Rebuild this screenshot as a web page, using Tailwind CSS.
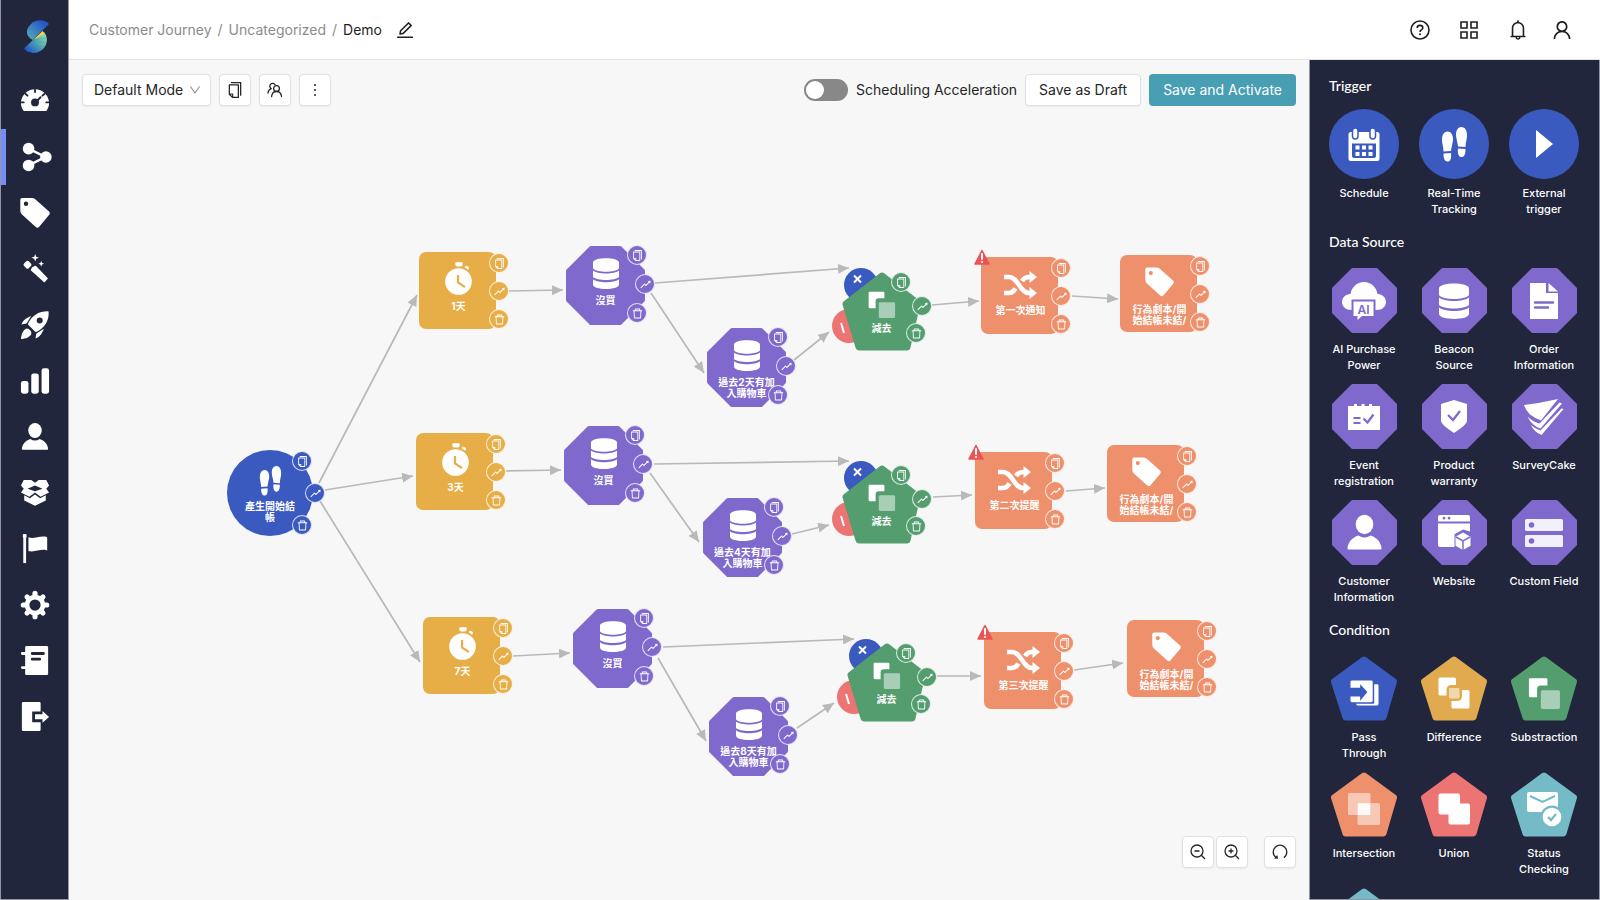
<!DOCTYPE html>
<html lang="en">
<head>
  <meta charset="UTF-8">
  <meta name="viewport" content="width=device-width, initial-scale=1.0">
  <title>Customer Journey - Demo</title>
  <script src="https://cdn.jsdelivr.net/npm/@tailwindcss/browser@4"></script>
</head>
<body class="h-screen flex overflow-hidden bg-[#f7f7f7] font-[Inter,'Noto_Sans_CJK_TC',sans-serif] text-sm text-[#262626]">

  <!-- icon sprite -->
  <svg class="hidden" xmlns="http://www.w3.org/2000/svg">
    <symbol id="copy" viewBox="64 64 896 896"><path d="M832 64H296c-4.400 0-8 3.600-8 8v56c0 4.400 3.600 8 8 8h496v688c0 4.400 3.600 8 8 8h56c4.400 0 8-3.600 8-8V96c0-17.700-14.300-32-32-32zM704 192H192c-17.700 0-32 14.300-32 32v530.700c0 8.500 3.400 16.600 9.400 22.600l173.300 173.300c2.200 2.200 4.700 4 7.400 5.500v1.900h4.200c3.500 1.300 7.200 2 11 2H704c17.700 0 32-14.300 32-32V224c0-17.700-14.300-32-32-32zM350 856.200L263.900 770H350v86.200zM664 888H414V746c0-22.100-17.900-40-40-40H232V264h432v624z"/></symbol>
    <symbol id="rise" viewBox="64 64 896 896"><path d="M917 211l-199 24c-7 1-9 9-5 14l59 59-226 226-102-102c-6-6-16-6-22 0L100 754a8 8 0 0 0 0 11l45 45c3 3 8 3 11 0L433 534l102 102c6 6 16 6 22 0L829 364l59 60a8 8 0 0 0 14-5l24-199c1-5-4-10-9-9z"/></symbol>
    <symbol id="trash" viewBox="64 64 896 896"><path d="M360 184h304v72h72v-80c0-35-29-64-64-64H352c-35 0-64 29-64 64v80h72zM864 256H160c-18 0-32 14-32 32v32c0 4 4 8 8 8h60l25 523c2 34 30 61 64 61h454c34 0 62-27 64-61l25-523h60c4 0 8-4 8-8v-32c0-18-14-32-32-32zM731 840H293l-25-512h487z"/></symbol>
    <symbol id="edit" viewBox="64 64 896 896"><path d="M257.700 752c2 0 4-.2 6-.5L431.900 722c2-.4 3.900-1.300 5.300-2.800l423.900-423.900a10 10 0 0 0 0-14.100L694.900 114.900c-1.900-1.900-4.400-2.900-7.100-2.900s-5.200 1-7.100 2.900L256.800 538.800c-1.500 1.500-2.400 3.300-2.800 5.300l-29.500 168.200a33.500 33.500 0 0 0 9.400 29.800c6.600 6.400 14.900 9.900 23.800 9.900zm67.400-174.400L687.800 215l73.300 73.300-362.700 362.600-88.900 15.700 15.600-89zM880 836H144c-17.700 0-32 14.300-32 32v36c0 4.400 3.600 8 8 8h784c4.400 0 8-3.600 8-8v-36c0-17.700-14.300-32-32-32z"/></symbol>
    <symbol id="down" viewBox="64 64 896 896"><path d="M884 256h-75c-5 0-10 3-13 7L512 654 228 263c-3-4-8-7-13-7h-75c-6 0-10 7-6 13l352 486c13 17 39 17 52 0l352-486c4-6 0-13-6-13z"/></symbol>
    <symbol id="bell" viewBox="64 64 896 896"><path d="M816 768h-24V428c0-141-104-258-240-277v-39c0-22-18-40-40-40s-40 18-40 40v39c-136 19-240 136-240 277v340h-24c-18 0-32 14-32 32v32c0 4 4 8 8 8h216c0 62 50 112 112 112s112-50 112-112h216c4 0 8-4 8-8v-32c0-18-14-32-32-32zM512 888c-26 0-48-21-48-48h96c0 27-21 48-48 48zM304 768V428c0-56 22-108 61-147s91-61 147-61 108 22 147 61 61 91 61 147v340z"/></symbol>
    <symbol id="account" viewBox="64 64 896 896"><path d="M858.500 763.600a374 374 0 0 0-80.600-119.500 375.600 375.600 0 0 0-119.500-80.600c-.4-.2-.8-.3-1.200-.5C719.500 518 760 444.700 760 362c0-137-111-248-248-248S264 225 264 362c0 82.700 40.500 156 102.800 201.100-.4.200-.8.300-1.200.5-44.800 18.900-85 46-119.500 80.600a375.600 375.600 0 0 0-80.600 119.500A371.700 371.700 0 0 0 136 901.800a8 8 0 0 0 8 8.200h60c4.400 0 7.900-3.500 8-7.800 2-77.200 33-149.500 87.800-204.300 56.700-56.700 132-87.900 212.200-87.900s155.500 31.200 212.200 87.900C779 752.700 810 825 812 902.200c.1 4.400 3.600 7.800 8 7.800h60a8 8 0 0 0 8-8.200c-1-47.800-10.900-94.300-29.500-138.200zM512 534c-45.900 0-89.100-17.900-121.600-50.400S340 407.900 340 362s17.900-89.100 50.400-121.600S466.100 190 512 190s89.100 17.900 121.600 50.400S684 316.100 684 362s-17.900 89.100-50.400 121.600S557.900 534 512 534z"/></symbol>
    <symbol id="help" viewBox="0 0 20 20"><g fill="none" stroke="currentColor" stroke-width="1.600"><circle cx="10" cy="10" r="9"/><path d="M7.200 8C7.200 6.400 8.400 5.400 10 5.400s2.800 1 2.800 2.500c0 2-2.800 2.100-2.800 4.100"/></g><circle cx="10" cy="14.200" r="1"/></symbol>
    <symbol id="apps" viewBox="0 0 18 18"><path fill="none" stroke="currentColor" stroke-width="1.600" d="M1 1h6v6H1zM11 1h6v6h-6zM1 11h6v6H1zM11 11h6v6h-6z"/></symbol>
    <symbol id="team" viewBox="0 0 16 16"><g fill="none" stroke="currentColor" stroke-width="1.300" stroke-linecap="round"><circle cx="9.500" cy="6.500" r="2.900"/><path d="M4.600 14.500c.3-3 2.300-5 4.900-5s4.700 2 5 5M8 2.700A2.800 2.800 0 1 0 4.100 6.500M1 11c.2-2 1.500-3.700 3.300-4.300"/></g></symbol>
    <symbol id="more" viewBox="0 0 16 16"><circle cx="8" cy="3" r="1"/><circle cx="8" cy="8" r="1"/><circle cx="8" cy="13" r="1"/></symbol>
    <symbol id="zoomOut" viewBox="0 0 16 16"><path fill="none" stroke="currentColor" stroke-width="1.300" d="M7 1a6 6 0 1 0 0 12A6 6 0 1 0 7 1zM11.300 11.300L15 15M4.500 7h5"/></symbol>
    <symbol id="zoomIn" viewBox="0 0 16 16"><path fill="none" stroke="currentColor" stroke-width="1.300" d="M7 1a6 6 0 1 0 0 12A6 6 0 1 0 7 1zM11.300 11.300L15 15M4.500 7h5M7 4.500v5"/></symbol>
    <symbol id="reset" viewBox="0 0 16 16"><path fill="none" stroke="currentColor" stroke-width="1.300" d="M4.200 13.500C2 12 1.200 10 1.200 8a6.800 6.800 0 0 1 13.600 0c0 2.300-1 4.300-2.900 5.600"/><path d="M2 14.500l3.300-3.600.7 3.800z"/></symbol>

    <symbol id="gauge" viewBox="0 0 32 32"><path d="M3.500 26C2 24 1 21.500 1 18.500a15 15 0 0 1 30 0c0 3-1 5.500-2.500 7.500q-.5.700-1.500.7H5q-1 0-1.500-.7z"/><g stroke="#21263c" stroke-width="2" stroke-linecap="round" fill="none"><path d="M16 4v2.500M6 8.500l2 1.800M26 8.500l-2 1.800M1 17.500h3M31 17.500h-3M17 17l5-5"/></g><circle cx="16" cy="17.500" r="4.200" fill="#21263c"/></symbol>
    <symbol id="share" viewBox="0 0 32 32"><path stroke="currentColor" stroke-width="2.600" d="M7 7l18 9L7 25" fill="none"/><circle cx="7" cy="7" r="6.200"/><circle cx="7" cy="25" r="6.200"/><circle cx="25.500" cy="16" r="6.200"/></symbol>
    <symbol id="tag" viewBox="0 0 30 30"><path fill-rule="evenodd" d="M2 0h10q1.500 0 3 1l14 12.500q1.500 1.500 0 3.500L19 29q-1.500 1.500-3.200 0L2 16.500Q.3 15 .3 12.500V2Q.3 0 2 0zM6 3.500a2.200 2.200 0 1 0 0 4.400 2.200 2.200 0 1 0 0-4.400z"/></symbol>
    <symbol id="wand" viewBox="0 0 30 30"><path d="M15.200 0l1 2.700 2.800 1-2.800 1-1 2.800-1-2.800-2.800-1 2.800-1zM21.200 6.700l.8 2.200 2.200.8-2.200.8-.8 2.200-.8-2.200-2.200-.8 2.200-.8z"/><path d="M7.500 8.500l2.200 2.200-2.200 2.200-2.200-2.200z" stroke="currentColor" stroke-width="3.500" stroke-linejoin="round"/><path d="M12.500 14l3-1.500L27 24.500l-2.700 3L11.500 16z" stroke="currentColor" stroke-width="1.500" stroke-linejoin="round"/></symbol>
    <symbol id="rocket" viewBox="0 0 32 32"><path fill-rule="evenodd" d="M30.500 1.500c.8 9-3.500 16.500-12 21.500q-1.500.8-2.500 0L9 16q-1-1 0-2.500C14 5 21.500 1 30.500 1.500zM21 8a3.200 3.200 0 1 0 0 6.400A3.200 3.200 0 0 0 21 8zM9.500 7.500L12 6.500 7 14.500 1.500 15.500q1.500-5 8-8zM24.500 22.500l1-2.500-8 5-1 5.500q5-1.500 8-8zM6.500 20C9 19 13 23 12 25.500 10.500 29 6 30.500 1 31c.5-5 2-9.500 5.500-11z"/></symbol>
    <symbol id="bars" viewBox="0 0 32 32"><rect x="1" y="16" width="8" height="13.500" rx="2.500"/><rect x="12" y="8" width="8" height="21.500" rx="2.500"/><rect x="23" y="2.500" width="8" height="27" rx="2.500"/></symbol>
    <symbol id="person" viewBox="0 0 32 32"><ellipse cx="16" cy="9" rx="7.200" ry="8"/><path d="M11 18q5 3.500 10 0c5 1.500 8.500 5.500 9 10.500q0 1-1 1H3q-1 0-1-1c.5-5 4-9 9-10.500z"/></symbol>
    <symbol id="box" viewBox="0 0 32 32"><path fill-rule="evenodd" d="M4 2l8 0 4 3 4-3 8 0 3 6-3 3.500 3 4-9 4.500-6-4.500-6 4.500-9-4.500 3-4L1 8zM16 8l-8 3.500 8 2.500 8-2.500zM4.500 18.500l6 3 5.500-4 5.500 4 6-3V24L16 29.500 4.500 24z"/></symbol>
    <symbol id="flag" viewBox="0 0 32 32"><rect x="3" y="0" width="4" height="4" rx="1"/><rect x="3.500" y="1" width="3" height="30"/><path d="M9 3.500c6 2.500 11-2 19-.5q1 .3 1 1.500v13c-7-2-12 2-19 1q-1 0-1-1z"/></symbol>
    <symbol id="gear" viewBox="0 0 32 32"><circle cx="16" cy="16" r="8.500" fill="none" stroke="currentColor" stroke-width="5"/><g stroke="currentColor" stroke-width="5.500" stroke-linecap="round"><path d="M16 3.500v3M16 25.500v3M3.500 16h3M25.500 16h3M7.500 7.500l1.500 1.500M23 23l1.500 1.500M7.500 24.500L9 23M23 9l1.500-1.500"/></g></symbol>
    <symbol id="notebook" viewBox="0 0 32 32"><rect x="5.500" y="0" width="24.500" height="31" rx="1.500"/><path d="M2.500 8H7M2.500 23H7" stroke="currentColor" stroke-width="3" stroke-linecap="round"/><path d="M13 8h12M13 14h8" stroke="#21263c" stroke-width="3" stroke-linecap="round"/></symbol>
    <symbol id="logout" viewBox="0 0 32 32"><rect x="2" y="0" width="20" height="31" rx="1.500"/><path d="M13 10h10V7l9 9-9 8.500v-3H13z" fill="#21263c"/><path d="M16 13h8V9.500l7 6.500-7 6v-3.500h-8z"/></symbol>

    <symbol id="steps" viewBox="0 0 27 35"><g id="foot"><path d="M1 13C1 8 3 4.500 6.500 4.500S12 8 12 12c0 4-1.500 7-2 12l-7.500.5C2.500 20 1 17 1 13z"/><path d="M2.500 26.500l7.500-.6c.5 5-.5 8.600-3.500 8.600s-4-3.500-4-8z"/></g><use href="#foot" transform="translate(27 -4.500) scale(-1 1)"/></symbol>
    <symbol id="clock" viewBox="0 0 27 33"><path d="M10.500.3h7q.8 3.700-1.500 4.300h-4Q9.700 4 10.500.3zM19.500 5q1.500-2.500 4-.2 1.500 1.700-.5 3z"/><circle cx="13.500" cy="19.500" r="13.300"/><path d="M13 13v7.500l7 4.700" fill="none" stroke="#e7ae47" stroke-width="2.200"/></symbol>
    <symbol id="db" viewBox="0 0 26 31"><path d="M0 4.500C0-1.200 26-1.200 26 4.500v6C22 14.800 4 14.800 0 10.500zM0 12.500c4 4 22 4 26 0V19c-4 4-22 4-26 0zM0 21.200c4 4 22 4 26 0v5.300c0 6-26 6-26 0z"/></symbol>
    <symbol id="shuffle" viewBox="0 0 33 28"><path fill="none" stroke="currentColor" stroke-width="4.600" d="M0 6h5c9 0 11 16 20 16h2M0 22h5c3 0 5-2 6.500-4.500M18 10c1.500-2.500 4-4 7-4h2"/><path d="M25.500 0L33 6l-7.500 6zM25.500 16l7.500 6-7.500 6z"/></symbol>
    <symbol id="minus" viewBox="0 0 32 32"><path d="M3 2h15q1.200 0 1.200 1.200V9H13q-3.500 0-3.500 3.500V20H3q-1.200 0-1.200-1.200V3.200Q1.800 2 3 2z"/><rect x="13" y="13.500" width="18" height="17.500" rx="1.500" opacity=".5"/></symbol>
    <symbol id="diff" viewBox="0 0 32 32"><path d="M2 .5h14.500q1.500 0 1.500 1.500V8h-4.500Q8.500 8 8.500 13v5.500H2Q.5 18.500.5 17V2Q.5.500 2 .5zM24 13h6q1.500 0 1.500 1.500V30q0 1.500-1.500 1.500H15q-1.500 0-1.500-1.500v-6h5.500q5 0 5-5z"/><rect x="11" y="11" width="10.500" height="10.500" rx="1" opacity=".55"/></symbol>
    <symbol id="inter" viewBox="0 0 32 32"><rect width="22.500" height="22" rx="1.500" opacity=".5"/><rect x="9.500" y="10" width="22.500" height="22" rx="1.500" opacity=".5"/><rect x="10" y="10.500" width="12" height="11.500" opacity=".8"/></symbol>
    <symbol id="union" viewBox="0 0 32 32"><rect x=".5" y=".5" width="21.500" height="21" rx="2"/><rect x="10.500" y="10.500" width="21.500" height="21" rx="2"/></symbol>
    <symbol id="pass" viewBox="0 0 30 28"><path d="M2 1h20q1.500 0 1.500 1.500V22q0 1.500-1.500 1.500H2Q.5 23.500.5 22v-4.500h10v4.500L18 13 10.500 5v3.500H.5v-6Q.5 1 2 1z"/><path d="M25 5h3q1.500 0 1.500 1.500v19q0 1.500-1.500 1.500H8q-1.500 0-1.500-1.500v-.3H24q1 0 1-1z"/></symbol>
    <symbol id="mail" viewBox="0 0 36 36"><rect x="1" y="1" width="31" height="20" rx="2"/><path d="M4 5l12.500 6L29 5" fill="none" stroke="#74bac7" stroke-width="2"/><circle cx="26" cy="26" r="11.500" fill="#74bac7"/><circle cx="26" cy="26" r="9.300"/><path d="M22 26l3 3 5-6" fill="none" stroke="#74bac7" stroke-width="2.200"/></symbol>
    <symbol id="calendar" viewBox="0 0 32 33"><path fill-rule="evenodd" d="M3 4h26q2.500 0 2.500 2.500v24Q31.500 33 29 33H3Q.5 33 .5 30.500v-24Q.5 4 3 4zM4 15.500V28q0 2 2 2h20q2 0 2-2V15.500z"/><g fill="currentColor" stroke="#3a5abf" stroke-width="1.500"><rect x="4.500" y="0" width="5.500" height="11" rx="2.700"/><rect x="22" y="0" width="5.500" height="11" rx="2.700"/></g><path d="M7.500 17.500h4v4h-4zM14 17.500h4v4h-4zM20.500 17.500h4v4h-4zM7.500 24h4v4h-4zM14 24h4v4h-4zM20.500 24h4v4h-4z"/></symbol>
    <symbol id="play" viewBox="0 0 17 28"><path d="M0 0l17 14L0 28z"/></symbol>
    <symbol id="ai" viewBox="0 0 44 38"><path d="M9 28C4 28 0 24.500 0 20s3.500-7.500 8.500-8C9.500 5 15 0 22 0s12.500 5 13.500 12c5 .5 8.500 3.500 8.500 8s-4 8-9 8z"/><path d="M9.500 17.500h24v18h-24z" fill="#8069cc"/><path d="M11.500 19.500h20V34H20l-4.500 4v-4h-4z"/><text x="21.500" y="31.500" text-anchor="middle" font-family="Inter" font-weight="600" font-size="12" fill="#8069cc">AI</text></symbol>
    <symbol id="order" viewBox="0 0 28 36"><path d="M0 0h16v10h12v26H0zM18.500 0L28 8.500h-9.500z"/><path d="M5 19.500h18M5 24.500h13" stroke="#8069cc" stroke-width="2.400" stroke-linecap="round"/></symbol>
    <symbol id="event" viewBox="0 0 32 26"><path d="M0 2h6V0h3v2h4.500V0h3v2H21V0h3v2h8v24H0z"/><path d="M5.500 14h7M5.500 19h7M15.500 14.500l4 4 6-8" fill="none" stroke="#8069cc" stroke-width="2.200"/></symbol>
    <symbol id="shield" viewBox="0 0 26 33"><path d="M13 0l13 4v17q0 3.500-13 12Q0 24.500 0 21V4z"/><path d="M7 15l5 5 7-9" fill="none" stroke="#8069cc" stroke-width="2.200"/></symbol>
    <symbol id="survey" viewBox="0 0 40 36"><path d="M0 6q17-2 34-6L17 21.500Q12 20 6 15.500Q2 12 0 6zM3.500 17.500Q9 23 15.500 24.500L35.500 3.500 38 4.500 16.500 29.500Q8 27 3.500 17.500zM7 26q4 4 9.500 5.500L37.500 9.500l2 .5L17.500 36Q10 33 7 26z"/></symbol>
    <symbol id="website" viewBox="0 0 33 36"><path fill-rule="evenodd" d="M2 0h28q2 0 2 2v4.500H0V2Q0 0 2 0zM6 1.800a1.400 1.400 0 1 0 0 2.800 1.400 1.400 0 1 0 0-2.800zM11 1.800a1.400 1.400 0 1 0 0 2.800 1.400 1.400 0 1 0 0-2.800z"/><path d="M0 8.500h32v8l-7-2-8.500 4.800V32H2q-2 0-2-2z"/><path d="M25 17.500l7.500 4.300v9L25 35l-7.500-4.200v-9z"/><path d="M18 22l7 4 7-4M25 26v9" fill="none" stroke="#8069cc" stroke-width="1.500"/></symbol>
    <symbol id="field" viewBox="0 0 38 28"><g opacity=".9"><rect width="38" height="12" rx="1.500"/><rect y="16" width="38" height="12" rx="1.500"/></g><circle cx="6.500" cy="6" r="2.800" fill="#8069cc"/><circle cx="6.500" cy="22" r="2.800" fill="#8069cc"/></symbol>

    <symbol id="octagon" viewBox="0 0 79 79"><path d="M25 2h29l23 23v29L54 77H25L2 54V25z" stroke="currentColor" stroke-width="4" stroke-linejoin="round"/></symbol>
    <symbol id="pentagon" viewBox="0 0 79 79"><path d="M40 4l35 27-10 44H17L4 32z" stroke="currentColor" stroke-width="7" stroke-linejoin="round"/></symbol>
    <symbol id="pentagonTile" viewBox="0 0 66 64"><path d="M33 3l30 22-10.500 36h-38L3 25z" stroke="currentColor" stroke-width="6" stroke-linejoin="round"/></symbol>
    <symbol id="square" viewBox="0 0 79 79"><rect width="77" height="77" rx="7"/></symbol>
    <symbol id="circle" viewBox="0 0 86 86"><circle cx="43" cy="43" r="43"/></symbol>
  </svg>

  <aside class="w-[69px] shrink-0 bg-[#21263c] border-x border-b border-[#9496a3] text-white">
    <a href="#" aria-label="Home" class="h-[73px] flex items-center justify-center pl-1">
      <svg class="w-[25px] h-[34px]" viewBox="0 0 25 34">
        <defs>
          <linearGradient id="logoTop" x1="1" y1="0" x2="0" y2="1"><stop offset="0.2" stop-color="#2457c9"/><stop offset="1" stop-color="#55b3b5"/></linearGradient>
          <linearGradient id="logoBottom" x1="0" y1="1" x2="1" y2="0"><stop offset="0.15" stop-color="#2457c9"/><stop offset="0.5" stop-color="#4fa3b5"/><stop offset="0.85" stop-color="#83dca6"/></linearGradient>
        </defs>
        <path fill="url(#logoTop)" d="M25 4C20-1 12-1 7 4 1 10 1.500 16 8.500 20z"/>
        <path fill="url(#logoBottom)" d="M20 12c4 5 4 12-1 17-6 5.500-14.500 5-19-.5L9 20z"/>
        <path fill="#f3cf57" d="M9 20l9.500-9q1.500 1 2 3z"/>
        <path stroke="#3f8fb0" stroke-width=".4" d="M9 20l13-2M9 20l13 3M9 20l9 9.500M9 20l4 12.500M9 20v13M9 20l-5 11.500"/>
      </svg>
    </a>
    <nav id="menu"></nav>
  </aside>

  <div class="flex-1 min-w-0 flex flex-col">
    <header class="h-15 shrink-0 bg-white border-b border-[#e3e3e3] flex items-center justify-between pl-5 pr-7">
      <nav class="flex items-center gap-1.5 text-[#8c8c8c]">
        <a href="#">Customer Journey</a><span>/</span>
        <a href="#">Uncategorized</a><span>/</span>
        <span class="text-[#1f1f1f]">Demo</span>
        <button aria-label="Rename" class="ml-2 text-[#1f1f1f]"><svg class="size-[18px] fill-current"><use href="#edit"/></svg></button>
      </nav>
      <div class="flex items-center text-[#1f1f1f]">
        <button aria-label="Help" class="mr-[30px]"><svg class="size-5 fill-current"><use href="#help"/></svg></button>
        <button aria-label="Apps" class="mr-[30px]"><svg class="size-[18px] fill-current"><use href="#apps"/></svg></button>
        <button aria-label="Notifications" class="mr-6"><svg class="size-5 fill-current"><use href="#bell"/></svg></button>
        <button aria-label="Account"><svg class="size-5 fill-current"><use href="#account"/></svg></button>
      </div>
    </header>

    <div class="flex-1 min-h-0 flex">
      <main class="relative flex-1 min-w-0 overflow-hidden flex flex-col justify-between">
        <!-- journey canvas -->
        <div id="canvas" class="absolute inset-0">
          <svg class="absolute inset-0 w-full h-full">
            <defs>
              <marker id="arrow" viewBox="0 0 11 10" refX="11" refY="5" markerWidth="11" markerHeight="10" markerUnits="userSpaceOnUse" orient="auto"><path d="M0 0l11 5-11 5z" fill="#b9b9b9"/></marker>
            </defs>
            <g id="edges" stroke="#b9b9b9" stroke-width="1.700"></g>
          </svg>
        </div>

        <div class="relative flex items-center justify-between px-[13px] pt-[14px]">
          <div class="flex gap-2">
            <div class="relative">
              <select aria-label="Mode" class="appearance-none w-[129px] h-8 pl-[11px] rounded border border-[#e0e0e0] bg-white shadow-xs">
                <option>Default Mode</option>
              </select>
              <svg class="absolute right-[10px] top-[10px] size-3 fill-[#8c8c8c] pointer-events-none"><use href="#down"/></svg>
            </div>
            <button aria-label="Copy" class="size-8 flex items-center justify-center rounded border border-[#e0e0e0] bg-white shadow-xs"><svg class="size-4 fill-current"><use href="#copy"/></svg></button>
            <button aria-label="Audience" class="size-8 flex items-center justify-center rounded border border-[#e0e0e0] bg-white shadow-xs"><svg class="size-4 fill-current"><use href="#team"/></svg></button>
            <button aria-label="More" class="size-8 flex items-center justify-center rounded border border-[#e0e0e0] bg-white shadow-xs"><svg class="size-4 fill-current"><use href="#more"/></svg></button>
          </div>
          <div class="flex items-center gap-2">
            <input id="accel" type="checkbox" role="switch" class="appearance-none relative w-11 h-[22px] rounded-full bg-[#888] before:absolute before:left-[2px] before:top-[2px] before:size-[18px] before:rounded-full before:bg-white">
            <label for="accel">Scheduling Acceleration</label>
            <button class="h-8 px-[13px] rounded border border-[#e0e0e0] bg-white shadow-xs">Save as Draft</button>
            <button class="h-8 px-[14px] rounded bg-[#489eb3] text-white">Save and Activate</button>
          </div>
        </div>

        <div class="relative flex justify-end px-[13px] pb-8">
          <button aria-label="Zoom out" class="size-8 mr-[2px] flex items-center justify-center rounded border border-[#e0e0e0] bg-white shadow-xs"><svg class="size-4 fill-current"><use href="#zoomOut"/></svg></button>
          <button aria-label="Zoom in" class="size-8 mr-4 flex items-center justify-center rounded border border-[#e0e0e0] bg-white shadow-xs"><svg class="size-4 fill-current"><use href="#zoomIn"/></svg></button>
          <button aria-label="Reset view" class="size-8 flex items-center justify-center rounded border border-[#e0e0e0] bg-white shadow-xs"><svg class="size-4 fill-current"><use href="#reset"/></svg></button>
        </div>
      </main>

      <aside id="palette" class="w-[291px] shrink-0 overflow-hidden bg-[#21263c] border-x border-b border-[#9496a3] pt-3 text-white"></aside>
    </div>
  </div>

  <script>
    const BLUE = '#3a5abf', YELLOW = '#e7ae47', PURPLE = '#8069cc', GREEN = '#539d6f', ORANGE = '#ee906b', RED = '#ec7473', TEAL = '#74bac7';

    // left menu
    const menu = [
      ['gauge', 'Dashboard'], ['share', 'Customer Journey'], ['tag', 'Tags'], ['wand', 'Magic'],
      ['rocket', 'Campaigns'], ['bars', 'Reports'], ['person', 'Customers'], ['box', 'Products'],
      ['flag', 'Goals'], ['gear', 'Settings'], ['notebook', 'Logs'], ['logout', 'Log out'],
    ];
    document.getElementById('menu').innerHTML = menu.map(([icon, name]) => {
      const active = icon === 'share';
      return `<a href="#" aria-label="${name}" class="relative h-14 flex items-center justify-center ${active ? 'pl-1' : ''}">
        ${active ? '<span class="absolute left-0 inset-y-0 w-[5px] bg-[#768cfa]"></span>' : ''}
        <svg class="size-[30px] fill-current overflow-visible"><use href="#${icon}"/></svg>
      </a>`;
    }).join('');

    // right palette
    const palette = [
      { title: 'Trigger', shape: 'circle', items: [
        ['calendar', 'Schedule', BLUE, 32, 33], ['steps', 'Real-Time Tracking', BLUE, 27, 35], ['play', 'External trigger', BLUE, 17, 28],
      ] },
      { title: 'Data Source', shape: 'octagon', items: [
        ['ai', 'AI Purchase Power', PURPLE, 44, 38], ['db', 'Beacon Source', PURPLE, 30, 36], ['order', 'Order Information', PURPLE, 28, 36],
        ['event', 'Event registration', PURPLE, 32, 26], ['shield', 'Product warranty', PURPLE, 26, 33], ['survey', 'SurveyCake', PURPLE, 40, 36],
        ['person', 'Customer Information', PURPLE, 39, 40], ['website', 'Website', PURPLE, 33, 36], ['field', 'Custom Field', PURPLE, 38, 28],
      ] },
      { title: 'Condition', shape: 'pentagonTile', items: [
        ['pass', 'Pass Through', BLUE, 29, 28], ['diff', 'Difference', '#e1aa4f', 32, 32], ['minus', 'Substraction', GREEN, 34, 34],
        ['inter', 'Intersection', ORANGE, 32, 32], ['union', 'Union', RED, 32, 32], ['mail', 'Status Checking', TEAL, 36, 36],
        ['mail', '', TEAL, 36, 36],
      ] },
    ];
    const tileSize = { circle: 'size-[70px]', octagon: 'size-[65px]', pentagonTile: 'w-[66px] h-[65px]' };
    document.getElementById('palette').innerHTML = palette.map(({ title, shape, items }) => `
      <h2 class="pt-[2px] pl-[19px] text-sm leading-6 font-medium font-[Lato,sans-serif]">${title}</h2>
      <div class="grid grid-cols-3 pl-[9px] pr-[10px] ${shape === 'circle' ? 'pt-[11px]' : 'pt-[14px]'}">
        ${items.map(([icon, name, color, w, h]) => `
          <button class="flex flex-col items-center pb-[11px]">
            <span class="grid place-items-center ${tileSize[shape]}">
              <svg class="col-start-1 row-start-1 w-full h-full" style="fill:${color};color:${color}"><use href="#${shape}"/></svg>
              <svg class="col-start-1 row-start-1 fill-current ${shape === 'pentagonTile' ? 'mt-2' : ''}" width="${w}" height="${h}"><use href="#${icon}"/></svg>
            </span>
            <span class="${shape === 'circle' ? 'mt-[6px]' : 'mt-2'} h-8 w-[71px] text-[11px] leading-4 font-medium">${name}</span>
          </button>`).join('')}
      </div>`).join('');

    // journey nodes: type, x, y, label
    const types = {
      start: { shape: 'circle', icon: 'steps', w: 23, h: 30, color: BLUE, box: 'size-[86px] pt-[15px] gap-1', ports: [[75, 11], [88, 43], [75, 75]] },
      wait: { shape: 'square', icon: 'clock', w: 27, h: 33, color: YELLOW, box: 'size-[79px] pt-[10px] gap-[7px]', ports: [[80, 11], [80, 39], [80, 67]] },
      source: { shape: 'octagon', icon: 'db', w: 26, h: 31, color: PURPLE, box: 'size-[79px] pt-[11px] gap-[6px]', ports: [[71, 9], [79, 38], [71, 67]] },
      minus: { shape: 'pentagon', icon: 'minus', w: 29, h: 29, color: GREEN, box: 'size-[79px] pt-4 gap-[3px]', ports: [[59, 10], [80, 34], [74, 61]] },
      notify: { shape: 'square', icon: 'shuffle', w: 33, h: 28, color: ORANGE, box: 'size-[79px] pt-3 gap-1', ports: [[80, 11], [80, 39], [80, 67]] },
      tagging: { shape: 'square', icon: 'tag', w: 29, h: 30, color: ORANGE, box: 'size-[79px] pt-[11px] gap-[6px]', ports: [[80, 11], [80, 39], [80, 67]] },
    };
    const nodes = [
      ['start', 158, 390, '產生開始結<br>帳'],
      ['wait', 350, 192, '1天'], ['wait', 347, 373, '3天'], ['wait', 354, 557, '7天'],
      ['source', 497, 186, '沒買'], ['source', 638, 268, '過去2天有加<br>入購物車'],
      ['source', 495, 366, '沒買'], ['source', 634, 438, '過去4天有加<br>入購物車'],
      ['source', 504, 549, '沒買'], ['source', 640, 637, '過去8天有加<br>入購物車'],
      ['minus', 773, 212, '減去'], ['minus', 773, 405, '減去'], ['minus', 778, 583, '減去'],
      ['notify', 912, 197, '第一次通知'], ['notify', 906, 392, '第二次提醒'], ['notify', 915, 572, '第三次提醒'],
      ['tagging', 1051, 195, '行為劇本/開<br>始結帳未結/'], ['tagging', 1038, 385, '行為劇本/開<br>始結帳未結/'], ['tagging', 1058, 560, '行為劇本/開<br>始結帳未結/'],
    ];
    const edges = [
      [250, 423, 348, 235], [256, 430, 344, 416], [251, 441, 351, 602],
      [440, 231, 494, 230], [437, 411, 492, 410], [444, 596, 501, 593],
      [586, 223, 780, 208], [582, 233, 635, 313], [725, 300, 760, 272],
      [585, 404, 780, 401], [581, 413, 630, 482], [723, 474, 760, 465],
      [594, 587, 785, 579], [589, 598, 637, 681], [728, 668, 765, 643],
      [863, 245, 910, 241], [864, 437, 903, 435], [868, 616, 912, 616],
      [1003, 236, 1049, 239], [997, 431, 1036, 428], [1005, 610, 1054, 603],
    ];
    document.getElementById('edges').innerHTML = edges.map(([x1, y1, x2, y2]) =>
      `<line x1="${x1}" y1="${y1}" x2="${x2}" y2="${y2}" marker-end="url(#arrow)"/>`).join('');

    const portIcons = [['copy', 'Copy'], ['rise', 'Connect'], ['trash', 'Delete']];

    // the two inputs that stick out behind a set operation
    const inputs = `
      <svg class="absolute -left-3 -top-4 w-12 h-24 overflow-visible" viewBox="0 0 48 96">
        <circle cx="31" cy="29" r="17" fill="#3a5abf"/>
        <path d="M24 19.500l7 7m0-7l-7 7" stroke="#fff" stroke-width="2"/>
        <circle cx="19" cy="70" r="17" fill="#ec7473"/>
        <path d="M11 67l3 10" stroke="#fff" stroke-width="2"/>
      </svg>`;
    const warning = `
      <svg class="absolute -left-[7px] -top-2 size-4 overflow-visible" viewBox="0 0 16 16">
        <path d="M8 1.500L15 15H1z" fill="#ea5455" stroke="#ea5455" stroke-width="1.500" stroke-linejoin="round"/>
        <path d="M8 5v5" stroke="#fff" stroke-width="2" stroke-linecap="round"/><circle cx="8" cy="13" r="1.100" fill="#fff"/>
      </svg>`;

    document.getElementById('canvas').insertAdjacentHTML('beforeend', nodes.map(([type, x, y, label]) => {
      const t = types[type];
      return `<div class="absolute flex flex-col items-center text-white ${t.box}" style="left:${x}px;top:${y}px">
        ${type === 'minus' ? inputs : ''}
        <svg class="absolute inset-0 w-full h-full" style="fill:${t.color};color:${t.color}"><use href="#${t.shape}"/></svg>
        <span class="relative h-8 flex items-center"><svg class="fill-current" width="${t.w}" height="${t.h}"><use href="#${t.icon}"/></svg></span>
        <span class="relative text-[10px] leading-[11px] font-bold text-center whitespace-nowrap">${label}</span>
        ${type === 'notify' ? warning : ''}
        ${t.ports.map(([px, py], i) => `
          <button aria-label="${portIcons[i][1]}" class="absolute size-5 rounded-full border border-white/80 flex items-center justify-center" style="left:${px - 10}px;top:${py - 10}px;background:${t.color}">
            <svg class="size-[11px] fill-current"><use href="#${portIcons[i][0]}"/></svg>
          </button>`).join('')}
      </div>`;
    }).join(''));
  </script>
</body>
</html>
